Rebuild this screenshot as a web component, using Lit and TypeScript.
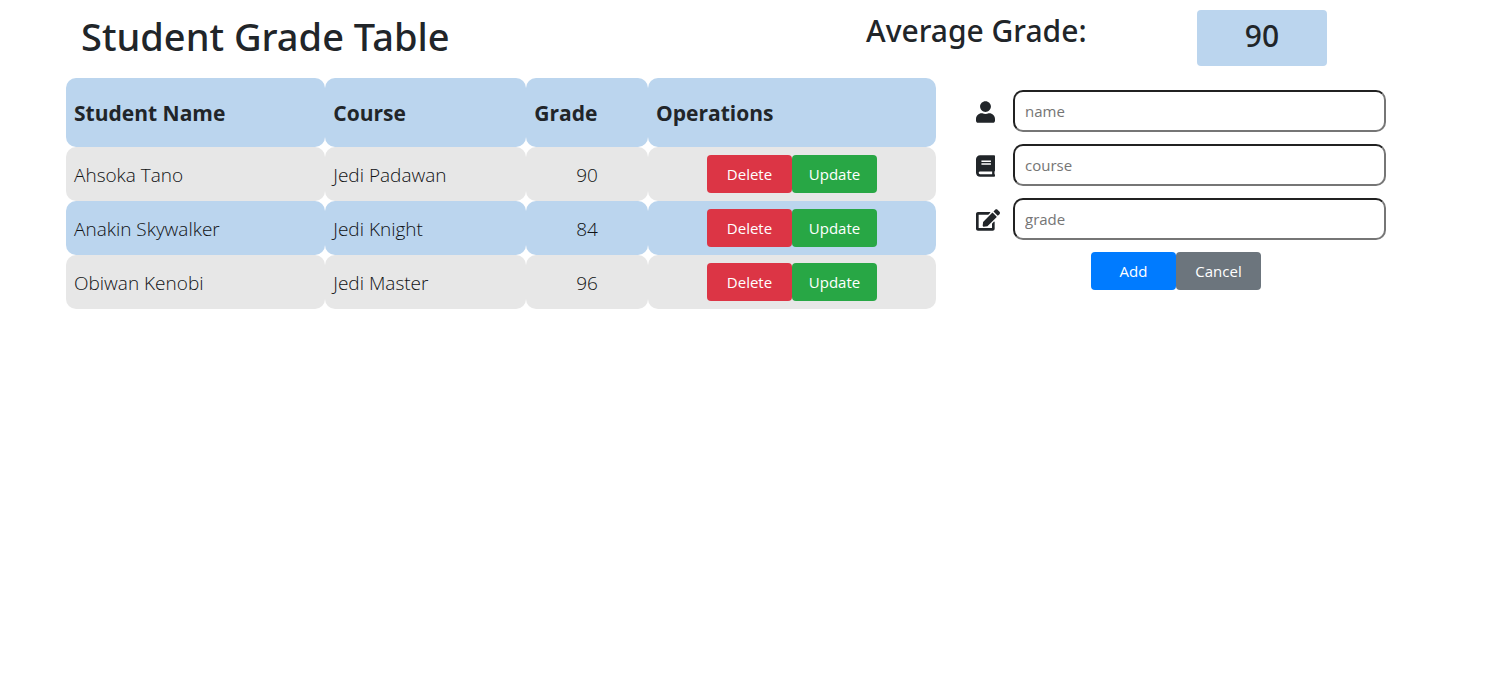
import { LitElement, html, css, svg } from "lit";
import { customElement, state } from "lit/decorators.js";

interface Student {
  name: string;
  course: string;
  grade: number;
}

const icons = {
  name: svg`<svg class="icon" viewBox="0 0 448 512" width="19" height="22" aria-hidden="true"><path d="M224 256c70.700 0 128-57.300 128-128S294.700 0 224 0 96 57.300 96 128s57.300 128 128 128zm89.600 32h-16.700c-22.200 10.200-46.900 16-72.900 16s-50.600-5.800-72.900-16h-16.700C60.200 288 0 348.200 0 422.400V464c0 26.500 21.500 48 48 48h352c26.500 0 48-21.500 48-48v-41.600c0-74.200-60.200-134.400-134.400-134.400z"/></svg>`,
  course: svg`<svg class="icon" viewBox="0 0 448 512" width="19" height="22" aria-hidden="true"><path d="M448 360V24c0-13.300-10.700-24-24-24H96C43 0 0 43 0 96v320c0 53 43 96 96 96h328c13.300 0 24-10.700 24-24v-16c0-7.500-3.500-14.300-8.900-18.700-4.200-15.400-4.200-59.300 0-74.700 5.400-4.300 8.900-11.100 8.900-18.600zM128 134c0-3.300 2.700-6 6-6h212c3.300 0 6 2.700 6 6v20c0 3.300-2.700 6-6 6H134c-3.300 0-6-2.700-6-6v-20zm0 64c0-3.300 2.700-6 6-6h212c3.300 0 6 2.700 6 6v20c0 3.300-2.700 6-6 6H134c-3.300 0-6-2.700-6-6v-20zm253.400 250H96c-17.700 0-32-14.300-32-32 0-17.600 14.400-32 32-32h285.400c-1.900 17.100-1.900 46.900 0 64z"/></svg>`,
  grade: svg`<svg class="icon" viewBox="0 0 576 512" width="24" height="22" aria-hidden="true"><path d="M402.600 83.200l90.200 90.200c3.800 3.800 3.800 10 0 13.800L274.400 405.600l-92.800 10.300c-12.400 1.400-22.900-9.100-21.500-21.500l10.300-92.800L388.800 83.200c3.800-3.800 10-3.800 13.800 0zm162-22.900l-48.800-48.800c-15.200-15.200-39.900-15.200-55.200 0l-35.400 35.400c-3.800 3.800-3.800 10 0 13.800l90.200 90.200c3.800 3.800 10 3.800 13.800 0l35.400-35.400c15.200-15.300 15.200-40 0-55.200zM384 346.200V448H64V128h229.800c3.200 0 6.200-1.300 8.500-3.500l40-40c7.600-7.600 2.200-20.500-8.500-20.500H48C21.500 64 0 85.500 0 112v352c0 26.500 21.500 48 48 48h352c26.500 0 48-21.500 48-48V306.200c0-10.700-12.900-16-20.500-8.500l-40 40c-2.200 2.300-3.500 5.300-3.500 8.500z"/></svg>`,
};

@customElement("app-root")
export class AppRoot extends LitElement {
  static styles = css`
    :host {
      display: block;
      box-sizing: border-box;
      padding: 10px 102px 10px 66px;
      font-family: "Open Sans", "Noto Sans", sans-serif;
      font-size: 15px;
      line-height: 24px;
      color: #212529;
    }
    *, *::before, *::after { box-sizing: border-box; }
    h1, h2, p { margin: 0; font-family: "Noto Sans", "Open Sans", sans-serif; font-weight: 500; }
    .top {
      display: grid;
      grid-template-columns: 800fr 331fr 189fr;
      align-items: start;
      min-height: 68px;
    }
    .title { padding-left: 15px; font-size: 38px; line-height: 52px; }
    .label { font-size: 30px; line-height: 42px; }
    .average {
      justify-self: start;
      width: 130px;
      height: 56px;
      border-radius: 4px;
      background: #bbd5ee;
      font-size: 30px;
      line-height: 52px;
      text-align: center;
    }
    .main {
      display: grid;
      grid-template-columns: 29fr 14fr;
      gap: 30px;
      align-items: start;
    }
    .grades {
      width: 100%;
      table-layout: fixed;
      border-collapse: separate;
      border-spacing: 0;
      text-align: left;
    }
    .col-name { width: 29.8%; }
    .col-course { width: 23.1%; }
    .col-grade { width: 14%; }
    th, td { border-radius: 10px; }
    th {
      height: 69px;
      padding: 8px;
      background: #bbd5ee;
      font-size: 21px;
      font-weight: 700;
    }
    td {
      padding: 8px 8px 6px;
      background: #e7e7e7;
      color: #101214;
      font-size: 19px;
      font-weight: 300;
      line-height: 40px;
      vertical-align: top;
    }
    tr:nth-child(even) td { background: #bbd5ee; }
    .number, .operations { text-align: center; }
    .buttons { display: flex; justify-content: center; }
    .btn {
      width: 85px;
      height: 38px;
      padding: 0;
      border: 0;
      border-radius: 4px;
      color: #fff;
      font: inherit;
      font-size: 15px;
      font-weight: 400;
      line-height: 24px;
      cursor: pointer;
    }
    .delete { background: #dc3545; }
    .update { background: #28a745; }
    .add { background: #007bff; }
    .cancel { background: #6c757d; }
    .form { display: grid; gap: 12px; padding-top: 12px; }
    .field {
      display: grid;
      grid-template-columns: 37px 1fr;
      align-items: center;
      padding-left: 10px;
    }
    .field label { padding-top: 2px; }
    .icon { display: block; fill: #212529; }
    .input {
      width: 100%;
      min-width: 0;
      height: 42px;
      padding: 0 10px;
      border: 2px inset #767676;
      border-radius: 10px;
      background: #fff;
      color: #495057;
      font: inherit;
    }
    .input::placeholder { color: #757575; opacity: 1; }
  `;

  @state() private students: Student[] = [
    { name: "Ahsoka Tano", course: "Jedi Padawan", grade: 90 },
    { name: "Anakin Skywalker", course: "Jedi Knight", grade: 84 },
    { name: "Obiwan Kenobi", course: "Jedi Master", grade: 96 },
  ];

  private get average() {
    const total = this.students.reduce((sum, s) => sum + s.grade, 0);
    return this.students.length ? Math.round(total / this.students.length) : 0;
  }

  private remove(student: Student) {
    this.students = this.students.filter((s) => s !== student);
  }

  private add(e: Event) {
    e.preventDefault();
    const form = e.target as HTMLFormElement;
    const data = new FormData(form);
    this.students = [
      ...this.students,
      {
        name: String(data.get("name")),
        course: String(data.get("course")),
        grade: Number(data.get("grade")),
      },
    ];
    form.reset();
  }

  private field(id: "name" | "course" | "grade") {
    return html`<div class="field">
      <label for=${id} aria-label=${id}>${icons[id]}</label>
      <input class="input" id=${id} name=${id} type="text" placeholder=${id} />
    </div>`;
  }

  render() {
    return html`
      <header class="top">
        <h1 class="title">Student Grade Table</h1>
        <h2 class="label">Average Grade:</h2>
        <p class="average">${this.average}</p>
      </header>
      <main class="main">
        <table class="grades">
          <colgroup>
            <col class="col-name" /><col class="col-course" /><col class="col-grade" /><col />
          </colgroup>
          <thead>
            <tr>
              <th scope="col">Student Name</th>
              <th scope="col">Course</th>
              <th scope="col">Grade</th>
              <th scope="col">Operations</th>
            </tr>
          </thead>
          <tbody>
            ${this.students.map(
              (s) => html`<tr>
                <td>${s.name}</td>
                <td>${s.course}</td>
                <td class="number">${s.grade}</td>
                <td class="operations">
                  <div class="buttons">
                    <button class="btn delete" type="button" @click=${() => this.remove(s)}>Delete</button>
                    <button class="btn update" type="button">Update</button>
                  </div>
                </td>
              </tr>`
            )}
          </tbody>
        </table>
        <form class="form" @submit=${this.add}>
          ${this.field("name")} ${this.field("course")} ${this.field("grade")}
          <div class="buttons">
            <button class="btn add" type="submit">Add</button>
            <button class="btn cancel" type="reset">Cancel</button>
          </div>
        </form>
      </main>
    `;
  }
}
